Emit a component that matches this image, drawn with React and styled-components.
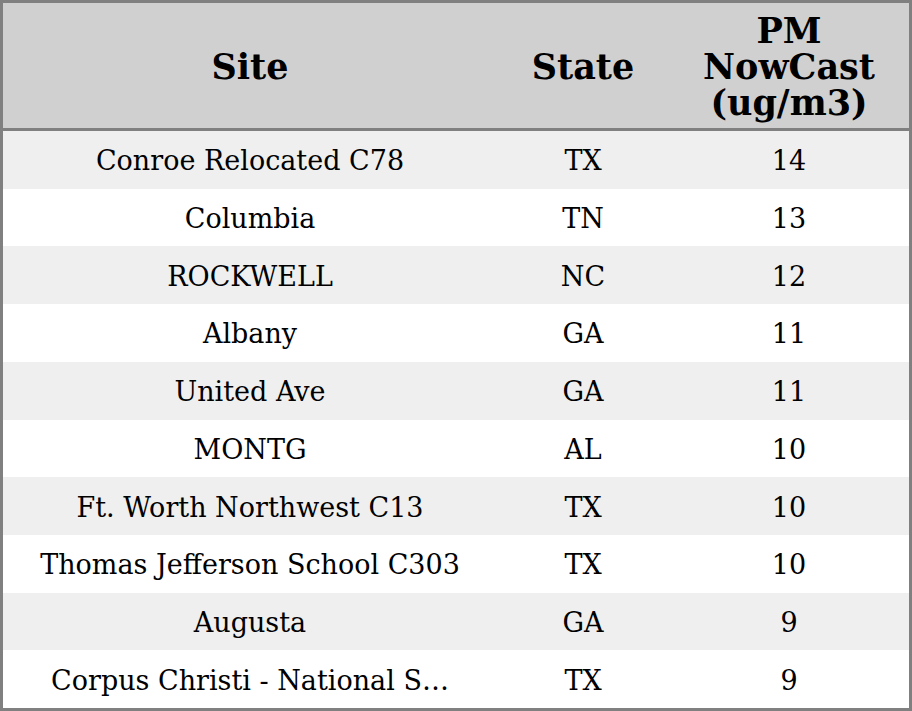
import React from 'react';
import styled, { createGlobalStyle } from 'styled-components';

const rows = [
	{ site: 'Conroe Relocated C78', state: 'TX', pm: 14 },
	{ site: 'Columbia', state: 'TN', pm: 13 },
	{ site: 'ROCKWELL', state: 'NC', pm: 12 },
	{ site: 'Albany', state: 'GA', pm: 11 },
	{ site: 'United Ave', state: 'GA', pm: 11 },
	{ site: 'MONTG', state: 'AL', pm: 10 },
	{ site: 'Ft. Worth Northwest C13', state: 'TX', pm: 10 },
	{ site: 'Thomas Jefferson School C303', state: 'TX', pm: 10 },
	{ site: 'Augusta', state: 'GA', pm: 9 },
	{ site: 'Corpus Christi - National Seashore', state: 'TX', pm: 9 },
];

// long site names are cut after 27 chars
const shorten = (s) => (s.length > 28 ? s.slice(0, 27) + '\u2026' : s);

const GlobalStyle = createGlobalStyle`
	html, body {
		margin: 0;
		padding: 0;
		background: #ffffff;
	}
	body {
		font-family: 'DejaVu Serif', serif;
		color: #000000;
	}
`;

const StyledTable = styled.div`
	box-sizing: border-box;
	width: 912px;
	height: 711px;
	border: 3px solid #808080;
	display: flex;
	flex-direction: column;
	overflow: hidden;
`;

const Header = styled.div`
	display: grid;
	grid-template-columns: 494px 172px 240px;
	height: 125px;
	flex: none;
	background-color: #d0d0d0;
	border-bottom: 3px solid #808080;
`;

const HeadCell = styled.div`
	display: flex;
	align-items: center;
	justify-content: center;
	text-align: center;
	font-weight: bold;
	font-size: 35px;
	line-height: 36px;
	padding-top: 2px;
`;

const Body = styled.div`
	flex: 1;
	display: flex;
	flex-direction: column;
`;

const Row = styled.div`
	flex: 1;
	display: grid;
	grid-template-columns: 494px 172px 240px;
	align-items: center;
	background-color: ${({ $odd }) => ($odd ? '#efefef' : '#ffffff')};
`;

const Cell = styled.div`
	text-align: center;
	font-size: 27px;
	white-space: nowrap;
	padding-top: 2px;
`;

const App = () => {
	return (
		<>
			<GlobalStyle />
			<StyledTable>
				<Header>
					<HeadCell>Site</HeadCell>
					<HeadCell>State</HeadCell>
					<HeadCell>
						PM
						<br />
						NowCast
						<br />
						(ug/m3)
					</HeadCell>
				</Header>
				<Body>
					{rows.map((r, i) => (
						<Row key={i} $odd={i % 2 === 0}>
							<Cell>{shorten(r.site)}</Cell>
							<Cell>{r.state}</Cell>
							<Cell>{r.pm}</Cell>
						</Row>
					))}
				</Body>
			</StyledTable>
		</>
	);
};

export default App;
